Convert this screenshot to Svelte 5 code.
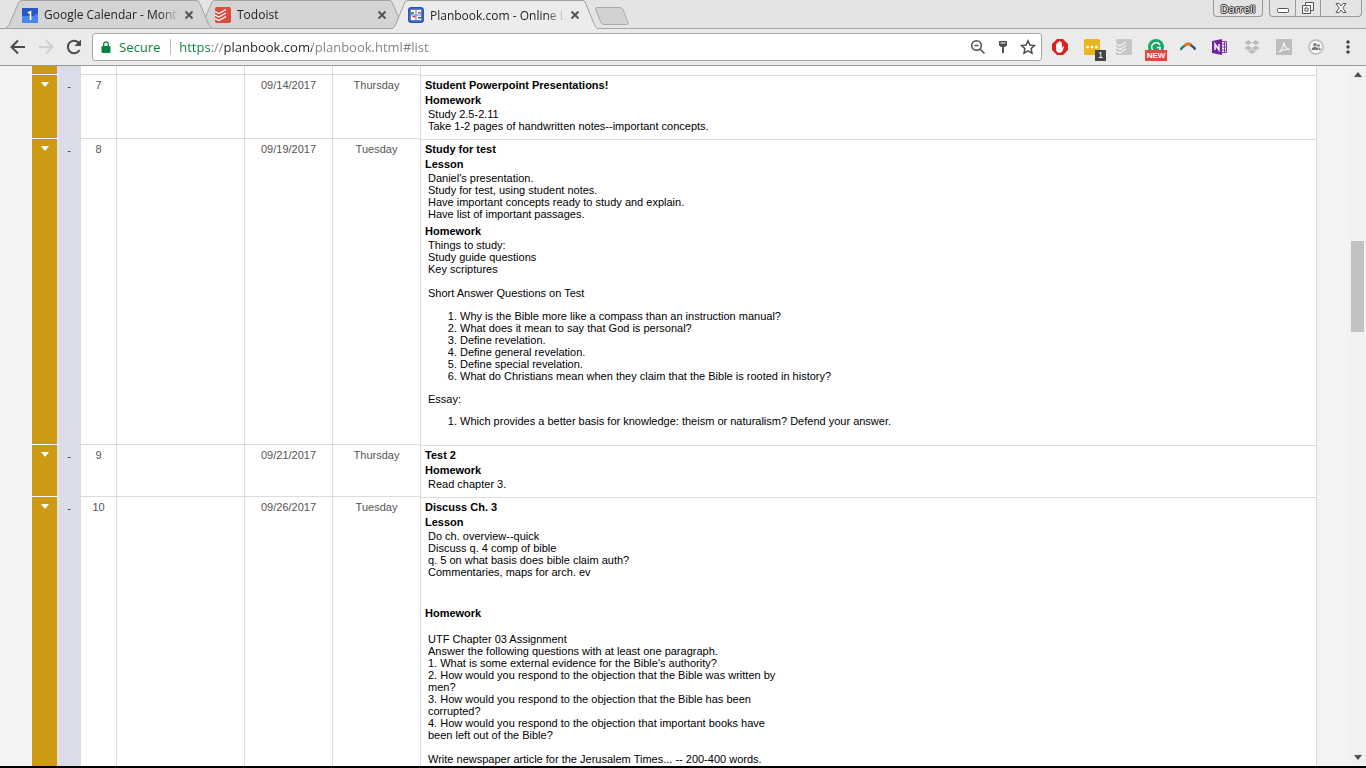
<script lang="ts">
  type Section = { title: string; text?: string; questions?: string[]; essay?: string[] };

  type Day = {
    number: number;
    date: string;
    weekday: string;
    title: string;
    sections: Section[];
  };

  const tabs = [
    { title: "Google Calendar - Month", icon: "calendar", active: false },
    { title: "Todoist", icon: "todoist", active: false },
    { title: "Planbook.com - Online L", icon: "planbook", active: true },
  ];

  const days: Day[] = [
    {
      number: 7,
      date: "09/14/2017",
      weekday: "Thursday",
      title: "Student Powerpoint Presentations!",
      sections: [
        {
          title: "Homework",
          text: "Study 2.5-2.11\nTake 1-2 pages of handwritten notes--important concepts.",
        },
      ],
    },
    {
      number: 8,
      date: "09/19/2017",
      weekday: "Tuesday",
      title: "Study for test",
      sections: [
        {
          title: "Lesson",
          text: "Daniel's presentation.\nStudy for test, using student notes.\nHave important concepts ready to study and explain.\nHave list of important passages.",
        },
        {
          title: "Homework",
          text: "Things to study:\nStudy guide questions\nKey scriptures\n\nShort Answer Questions on Test",
          questions: [
            "Why is the Bible more like a compass than an instruction manual?",
            "What does it mean to say that God is personal?",
            "Define revelation.",
            "Define general revelation.",
            "Define special revelation.",
            "What do Christians mean when they claim that the Bible is rooted in history?",
          ],
          essay: [
            "Which provides a better basis for knowledge: theism or naturalism? Defend your answer.",
          ],
        },
      ],
    },
    {
      number: 9,
      date: "09/21/2017",
      weekday: "Thursday",
      title: "Test 2",
      sections: [{ title: "Homework", text: "Read chapter 3." }],
    },
    {
      number: 10,
      date: "09/26/2017",
      weekday: "Tuesday",
      title: "Discuss Ch. 3",
      sections: [
        {
          title: "Lesson",
          text: "Do ch. overview--quick\nDiscuss q. 4 comp of bible\nq. 5 on what basis does bible claim auth?\nCommentaries, maps for arch. ev\n\n\n",
        },
        {
          title: "Homework",
          text: "\nUTF Chapter 03 Assignment\nAnswer the following questions with at least one paragraph.\n1. What is some external evidence for the Bible's authority?\n2. How would you respond to the objection that the Bible was written by\nmen?\n3. How would you respond to the objection that the Bible has been\ncorrupted?\n4. How would you respond to the objection that important books have\nbeen left out of the Bible?\n\nWrite newspaper article for the Jerusalem Times... -- 200-400 words.",
        },
      ],
    },
  ];

  let address = $state("https://planbook.com/planbook.html#list");
</script>

<div class="browser">
  <header class="tab-strip">
    <nav class="tabs" aria-label="Tabs">
      {#each tabs as tab, i}
        <div class="tab" class:active={tab.active} style:z-index={tab.active ? 9 : 5 - i}>
          <svg class="shape" viewBox="0 0 206 29" preserveAspectRatio="none" aria-hidden="true">
            <path d="M0 29 L3 26 L13 2 Q14 .5 16 .5 H190 Q192 .5 193 2 L203 26 L206 29" />
          </svg>
          <svg class="favicon" viewBox="0 0 16 16" aria-hidden="true">
            {#if tab.icon === "calendar"}
              <path fill="#4a86f0" d="M0 1h16v15H0z" />
              <path fill="#2a56c6" d="M0 1h16v5l-4 3H0z" />
              <path fill="none" stroke="#fff" stroke-width="1.6" d="M6 6l2.5-1.2V13" />
            {:else if tab.icon === "todoist"}
              <rect width="16" height="16" rx="2" fill="#db4c3f" />
              <path fill="none" stroke="#fff" stroke-width="1.3" d="M0 4.5l4 2 7-4M0 8l4 2 7-4M0 11.500l4 2 7-4" />
            {:else}
              <rect x=".8" y=".8" width="14.400" height="14.400" rx="2.500" fill="#5b7fd0" stroke="#2d4fae" stroke-width="1.5" />
              <path fill="#fff" d="M3 3h4.500v4.500H3zM8.500 3H13v4.500H8.500zM3 8.500h4.500V13H3zM8.500 8.500H13V13H8.500z" />
              <path fill="#4a9a55" d="M3 5h3v2H3z" />
              <path fill="#c8443d" d="M10 5h3v1.500h-3zM4.500 9h3v1.500h-3z" />
              <path fill="#2d4fae" d="M10 10h3v1.500h-3z" />
            {/if}
          </svg>
          <span class="tab-title">{tab.title}</span>
          <button class="close" type="button" aria-label="Close tab">
            <svg viewBox="0 0 10 10"><path d="M1.500 1.500l7 7M8.500 1.500l-7 7" /></svg>
          </button>
        </div>
      {/each}
      <button class="new-tab" type="button" aria-label="New tab">
        <svg viewBox="0 0 36 18"><path d="M3 .5h23q2 0 3 2l5 13q.5 2-1.500 2H10q-2 0-3-2L1.500 2.500Q1 .5 3 .5z" /></svg>
      </button>
    </nav>
    <button class="user" type="button">Darrell</button>
    <div class="window-controls">
      <button type="button" aria-label="Minimize">
        <svg viewBox="0 0 16 16"><rect x="2.500" y="8.500" width="11" height="4" rx="1" /></svg>
      </button>
      <button type="button" aria-label="Restore">
        <svg viewBox="0 0 16 16"><path d="M5.500 2.500h8v8h-3v3h-8v-8h3zM5.500 5.500h5v5M5 8h3v3H5z" /></svg>
      </button>
      <button class="wide" type="button" aria-label="Close">
        <svg viewBox="0 0 16 16"><path d="M3 3.500h3l2 2.500 2-2.500h3L9.800 8l3.200 4.500h-3L8 10l-2 2.500H3L6.200 8z" /></svg>
      </button>
    </div>
  </header>

  <div class="toolbar">
    <div class="nav-buttons">
      <button type="button" aria-label="Back">
        <svg viewBox="0 0 16 16"><path d="M15 8H2M8 1.500L1.500 8 8 14.500" /></svg>
      </button>
      <button type="button" aria-label="Forward" disabled>
        <svg viewBox="0 0 16 16"><path d="M1 8h13M8 1.500L14.500 8 8 14.500" /></svg>
      </button>
      <button type="button" aria-label="Reload">
        <svg viewBox="0 0 16 16"><path d="M13.500 11A6.200 6.200 0 1 1 12.500 3.600L14 5" /><path class="solid" d="M15 .5v6.500H8.500z" /></svg>
      </button>
    </div>
    <div class="address">
      <svg class="lock" viewBox="0 0 10 13" aria-hidden="true">
        <path fill="#0b8043" d="M1.500 5h7q1 0 1 1v5q0 1-1 1h-7q-1 0-1-1V6q0-1 1-1z" />
        <path fill="none" stroke="#0b8043" stroke-width="1.300" d="M2.700 6V3.200a2.300 2.300 0 0 1 4.600 0V6" />
      </svg>
      <label for="url">Secure</label>
      <input id="url" type="text" spellcheck="false" bind:value={address} />
      <button type="button" aria-label="Zoom">
        <svg viewBox="0 0 16 16"><path d="M10 10l4.500 4.500M4.500 6.500h4" /><circle cx="6.500" cy="6.500" r="4.800" /></svg>
      </button>
      <button type="button" aria-label="Saved password">
        <svg viewBox="0 0 16 16"><path class="solid" d="M4 2h8v4.500L10 8H9v6H7V8H6L4 6.500z" /><path class="slot" d="M5.500 4h5" /></svg>
      </button>
      <button type="button" aria-label="Bookmark this page">
        <svg viewBox="0 0 16 16"><path d="M8 1.800l1.900 4.200 4.600.5-3.400 3.100.9 4.600L8 11.900l-4 2.300.9-4.600L1.500 6.500l4.600-.5z" /></svg>
      </button>
    </div>
    <div class="extensions">
      <button type="button" aria-label="Ad blocker">
        <svg viewBox="0 0 16 16">
          <path fill="#d8231f" d="M5 0h6l5 5v6l-5 5H5l-5-5V5z" />
          <path fill="#fff" d="M4 8V5q.7-.8 1.400 0V3.500q.8-.9 1.500 0v-1q.8-.8 1.500 0v1q.8-.8 1.500 0V9l1.200-1.500q1-.5 1 .3L10.500 12q-1 1.800-3 1.800Q4 13.500 4 10z" />
        </svg>
      </button>
      <button type="button" aria-label="Password manager">
        <svg viewBox="0 0 16 16">
          <rect width="16" height="16" rx="1.500" fill="#eab71a" />
          <g fill="#fff"><circle cx="3.500" cy="8" r="1.500" /><circle cx="8" cy="8" r="1.500" /><circle cx="12.500" cy="8" r="1.500" /></g>
        </svg>
        <span class="badge">1</span>
      </button>
      <button type="button" aria-label="Todoist">
        <svg viewBox="0 0 16 16">
          <rect width="16" height="16" rx="1.500" fill="#c6c6c6" />
          <path fill="none" stroke="#f5f5f5" stroke-width="1.300" d="M0 5l4 2 6-4M0 8.500l4 2 6-4M0 12l4 2 6-4" />
        </svg>
      </button>
      <button type="button" aria-label="Grammarly">
        <svg viewBox="0 0 16 16">
          <circle cx="8" cy="8" r="8" fill="#16a765" />
          <path fill="none" stroke="#fff" stroke-width="1.500" d="M12 6A4.500 4.500 0 1 0 12 10.500V8.500H9" />
        </svg>
        <span class="badge new">NEW</span>
      </button>
      <button type="button" aria-label="Boomerang">
        <svg viewBox="0 0 16 16">
          <path fill="none" stroke="#16877d" stroke-width="2.500" d="M.5 11Q2 8 5 6.500" />
          <path fill="none" stroke="#e87524" stroke-width="3" d="M5 6.500Q8 3.500 11 6" />
          <path fill="none" stroke="#27508c" stroke-width="2.500" d="M10.500 6Q13.500 7.500 15.500 10.500" />
        </svg>
      </button>
      <button type="button" aria-label="OneNote">
        <svg viewBox="0 0 16 16">
          <path fill="#fff" stroke="#8139a4" d="M8 2.500h6.500v11H8z" />
          <path fill="none" stroke="#8139a4" d="M9 5h5M9 8h5M9 11h5M12.500 3v10" />
          <path fill="#7423a0" d="M0 2l10-2v16L0 14z" />
          <path fill="none" stroke="#fff" stroke-width="1.400" d="M3 11V5l4 6V5" />
        </svg>
      </button>
      <button type="button" aria-label="Dropbox">
        <svg viewBox="0 0 16 16"><path fill="#bababa" d="M4.500 1L8 3.500 4 6 .5 3.500zM11.500 1l4 2.500L12 6 8 3.500zM4 6.500L8 9l-3.500 2.500L.5 9zM12 6.500L15.500 9l-4 2.500L8 9zM4 12.500l4-2.500 4 2.500L8 15z" /></svg>
      </button>
      <button type="button" aria-label="PDF">
        <svg viewBox="0 0 16 16">
          <rect width="16" height="16" fill="#bdbdbd" />
          <path fill="none" stroke="#efefef" stroke-width="1.300" d="M3 13Q7 10 8 3Q8 9 13.500 10.500Q8 9.500 3 13z" />
        </svg>
      </button>
      <button type="button" aria-label="Share to classroom">
        <svg viewBox="0 0 16 16">
          <circle cx="8" cy="8" r="7" fill="#f7f7f7" stroke="#bbb" stroke-width="1.500" />
          <g fill="#777"><circle cx="7" cy="5.800" r="1.700" /><circle cx="10.500" cy="6.500" r="1.300" /><path d="M3.500 11q0-3 3.500-3t3.500 3zM11 11q0-2-.8-2.600 2.600-.2 2.600 2.600z" /></g>
        </svg>
      </button>
      <button type="button" aria-label="Menu">
        <svg viewBox="0 0 16 16"><g fill="#444"><circle cx="8" cy="3" r="1.700" /><circle cx="8" cy="8" r="1.700" /><circle cx="8" cy="13" r="1.700" /></g></svg>
      </button>
    </div>
  </div>

  <div class="viewport">
    <main>
      <table>
        <colgroup>
          <col class="c-menu" /><col class="c-toggle" /><col class="c-number" /><col class="c-unit" />
          <col class="c-date" /><col class="c-date" /><col />
        </colgroup>
        <tbody>
          <tr class="previous">
            <td class="menu"></td><td class="toggle"></td><td></td><td></td><td></td><td></td><td></td>
          </tr>
          {#each days as day}
            <tr>
              <td class="menu">
                <button type="button" aria-label="Lesson actions">
                  <svg viewBox="0 0 8 5"><path fill="#fff" d="M0 0h8L4.500 4.500h-1z" /></svg>
                </button>
              </td>
              <td class="toggle"><button type="button" aria-label="Collapse">-</button></td>
              <td>{day.number}</td>
              <td></td>
              <td>{day.date}</td>
              <td>{day.weekday}</td>
              <td class="lesson">
                <h2>{day.title}</h2>
                {#each day.sections as section}
                  <section>
                    <h3>{section.title}</h3>
                    <div class="notes">
                      <div class="text">{section.text}</div>
                      {#if section.questions}
                        <ol>
                          {#each section.questions as question}
                            <li>{question}</li>
                          {/each}
                        </ol>
                      {/if}
                      {#if section.essay}
                        <div>Essay:</div>
                        <ol>
                          {#each section.essay as question}
                            <li>{question}</li>
                          {/each}
                        </ol>
                      {/if}
                    </div>
                  </section>
                {/each}
              </td>
            </tr>
          {/each}
        </tbody>
      </table>
    </main>
    <div class="scrollbar" aria-hidden="true">
      <svg viewBox="0 0 8 5"><path d="M0 5L4 0l4 5z" /></svg>
      <div class="track"><div class="thumb"></div></div>
      <svg viewBox="0 0 8 5"><path d="M0 0h8L4 5z" /></svg>
    </div>
  </div>
</div>

<style>
  :global(body) {
    margin: 0;
  }

  .browser {
    display: flex;
    flex-direction: column;
    box-sizing: border-box;
    height: 100vh;
    overflow: hidden;
    border-bottom: 2px solid #000;
    background: #fff;
    font-family: "Liberation Sans", Arial, sans-serif;
    font-size: 11px;
  }

  button {
    display: flex;
    align-items: center;
    justify-content: center;
    padding: 0;
    border: none;
    background: transparent;
    font: inherit;
    color: inherit;
  }

  .tab-strip {
    display: flex;
    align-items: flex-start;
    height: 28px;
    padding-right: 4px;
    border-bottom: 1px solid #a3a3a3;
    background: #e4e4e4;
    font-family: "Open Sans", "Segoe UI", sans-serif;
    font-size: 12px;
  }

  .tabs {
    display: flex;
    flex: 1;
    padding-left: 6px;
  }

  .tab {
    position: relative;
    display: flex;
    align-items: center;
    box-sizing: border-box;
    width: 206px;
    height: 29px;
    margin-right: -13px;
    padding: 1px 17px 0 16px;
    color: #222;
  }

  .shape {
    position: absolute;
    inset: 0;
    width: 100%;
    height: 100%;
    fill: #d4d4d4;
    stroke: #a0a0a0;
  }

  .tab:not(.active) {
    height: 28px;
  }

  .active .shape {
    fill: #ececec;
  }

  .favicon {
    position: relative;
    flex: none;
    width: 16px;
    height: 16px;
  }

  .tab-title {
    position: relative;
    flex: 1;
    margin: 0 4px 0 6px;
    overflow: hidden;
    white-space: nowrap;
    mask-image: linear-gradient(to right, #000 86%, transparent);
  }

  .close {
    position: relative;
    width: 12px;
    height: 12px;
  }

  .close svg {
    width: 10px;
    height: 10px;
    stroke: #555;
    stroke-width: 2;
  }

  .new-tab {
    width: 36px;
    height: 18px;
    margin: 7px 0 0 9px;
  }

  .new-tab svg {
    width: 36px;
    height: 18px;
    fill: #d2d2d2;
    stroke: #aaa;
  }

  .user {
    width: 50px;
    height: 17px;
    border: 1px solid #999;
    border-top: none;
    border-radius: 0 0 4px 4px;
    color: #fff;
    font-size: 11px;
    text-shadow: 1px 0 #222, -1px 0 #222, 0 1px #222, 0 -1px #222;
  }

  .window-controls {
    display: flex;
    margin-left: 6px;
    border: 1px solid #999;
    border-top: none;
    border-radius: 0 0 4px 4px;
  }

  .window-controls button {
    width: 25px;
    height: 16px;
  }

  .window-controls button + button {
    border-left: 1px solid #999;
  }

  .window-controls .wide {
    width: 41px;
  }

  .window-controls svg {
    width: 16px;
    height: 16px;
    fill: #fff;
    stroke: #555;
  }

  .toolbar {
    display: flex;
    align-items: center;
    height: 36px;
    padding-right: 2px;
    border-bottom: 1px solid #999;
    background: #ebebeb;
  }

  .nav-buttons {
    display: flex;
    gap: 12px;
    padding: 0 10px;
  }

  .nav-buttons svg {
    width: 16px;
    height: 16px;
    fill: none;
    stroke: #4a4a4a;
    stroke-width: 2;
  }

  .nav-buttons button:disabled svg {
    stroke: #cfcfcf;
  }

  .nav-buttons .solid {
    fill: #4a4a4a;
    stroke: none;
  }

  .address {
    display: flex;
    flex: 1;
    align-items: center;
    box-sizing: border-box;
    height: 28px;
    padding: 0 1px 0 8px;
    border: 1px solid #a6a6a6;
    border-radius: 3px;
    background: #fff;
    font-family: "Open Sans", "Segoe UI", sans-serif;
    font-size: 13px;
  }

  .lock {
    width: 10px;
    height: 13px;
  }

  .address label {
    margin-left: 8px;
    padding-right: 10px;
    border-right: 1px solid #bbb;
    color: #0b8043;
    line-height: 16px;
  }

  .address input {
    flex: 1;
    min-width: 0;
    padding: 0 0 0 8px;
    border: none;
    outline: none;
    background: linear-gradient(to right, #0b8043 40px, #808080 40px 53px, #222 53px 141px, #808080 141px);
    background-clip: text;
    color: transparent;
    caret-color: #222;
    font: inherit;
  }

  .address button {
    width: 25px;
    height: 24px;
  }

  .address button svg {
    width: 16px;
    height: 16px;
    fill: none;
    stroke: #505050;
    stroke-width: 1.5;
  }

  .address .solid {
    fill: #505050;
    stroke: none;
  }

  .address .slot {
    stroke: #fff;
    stroke-width: 1;
  }

  .extensions {
    display: flex;
    padding-left: 2px;
  }

  .extensions button {
    position: relative;
    width: 32px;
    height: 32px;
  }

  .extensions svg {
    width: 16px;
    height: 16px;
  }

  .badge {
    position: absolute;
    right: 2px;
    bottom: 2px;
    width: 11px;
    background: #444;
    color: #fff;
    font-size: 9px;
    line-height: 11px;
    text-align: center;
  }

  .badge.new {
    right: 5px;
    width: 22px;
    background: #dc4a3e;
    font-size: 8px;
    font-weight: bold;
  }

  .viewport {
    display: flex;
    flex: 1;
    min-height: 0;
    background: #f3f3f6;
  }

  main {
    flex: 1;
    padding: 0 32px;
    overflow: hidden;
  }

  table {
    width: 100%;
    border-spacing: 0;
    table-layout: fixed;
    background: #fff;
  }

  .c-menu {
    width: 27px;
  }

  .c-toggle {
    width: 22px;
  }

  .c-number {
    width: 36px;
  }

  .c-unit {
    width: 128px;
  }

  .c-date {
    width: 88px;
  }

  td {
    padding: 3px 4px 6px;
    border-top: 1px solid #d9dde0;
    border-right: 1px solid #d9dde0;
    color: #555;
    line-height: 15px;
    text-align: center;
    vertical-align: top;
  }

  .previous td {
    height: 8px;
    padding: 0;
    border-top: none;
  }

  .menu {
    padding: 7px 0 0;
    border-top-color: #fff;
    border-right: 2px solid #e4e1e0;
    background: #cf9a13;
  }

  .menu button {
    width: 100%;
  }

  .menu svg {
    width: 8px;
    height: 5px;
  }

  .toggle {
    padding: 3px 2px 0 0;
    border-top: none;
    border-right: none;
    background: #dadde8;
    color: #2a3f96;
  }

  .toggle button {
    width: 100%;
    line-height: 18px;
  }

  .lesson {
    border-top-color: transparent;
    box-shadow: inset 0 1px #d9dde0;
    color: #000;
    text-align: left;
  }

  h2,
  h3 {
    margin: 0;
    font-size: 11px;
    line-height: 15px;
  }

  section + section {
    margin-top: 4px;
  }

  .notes {
    padding-left: 3px;
    line-height: 12px;
  }

  .text {
    white-space: pre-line;
  }

  ol {
    margin: 11px 0;
    padding-left: 32px;
  }

  ol:last-child {
    margin-top: 10px;
  }

  .scrollbar {
    display: flex;
    flex-direction: column;
    align-items: center;
    box-sizing: border-box;
    width: 17px;
    padding: 6px 0;
    background: #f1f1f1;
  }

  .scrollbar svg {
    width: 8px;
    height: 5px;
    fill: #505050;
  }

  .track {
    flex: 1;
    width: 13px;
  }

  .thumb {
    height: 91px;
    margin-top: 164px;
    background: #c1c1c1;
  }
</style>
